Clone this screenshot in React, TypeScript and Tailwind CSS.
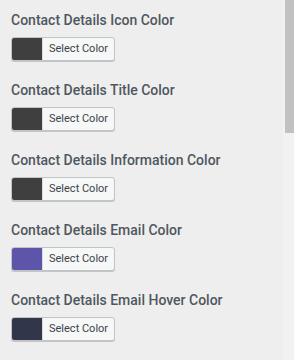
const items = [
  { label: "Contact Details Icon Color", color: "bg-[#3f3f3f]" },
  { label: "Contact Details Title Color", color: "bg-[#3f3f3f]" },
  { label: "Contact Details Information Color", color: "bg-[#3f3f3f]" },
  { label: "Contact Details Email Color", color: "bg-[#5d55a9]" },
  { label: "Contact Details Email Hover Color", color: "bg-[#32364a]" },
];

function ColorButton({ color }: { color: string }) {
  return (
    <button className="flex h-[24px] items-stretch overflow-hidden rounded-[3px] border border-[#c3c4c7] bg-[#f6f7f7] shadow-[0_1px_0_#c3c4c7]">
      <span className={`w-[30px] ${color}`} />
      <span className="flex items-center border-l border-[#dcdcde] px-[6px] text-[11px] text-[#3c434a]">
        Select Color
      </span>
    </button>
  );
}

export default function App() {
  return (
    <div className="flex h-[360px] w-[294px] overflow-hidden bg-[#eeeeee] font-['Roboto',sans-serif]">
      <div className="flex-1 pl-[11px] pt-[11px]">
        {items.map((item) => (
          <div key={item.label} className="mb-[20px]">
            <p className="text-[14px] font-medium leading-[18px] text-[#50575e]">{item.label}</p>
            <div className="mt-[8px] flex">
              <ColorButton color={item.color} />
            </div>
          </div>
        ))}
      </div>
      {/* scrollbar */}
      <div className="w-[11px] bg-[#f1f1f1] pl-[2px]">
        <div className="h-[133px] bg-[#c1c1c1]" />
      </div>
    </div>
  );
}
